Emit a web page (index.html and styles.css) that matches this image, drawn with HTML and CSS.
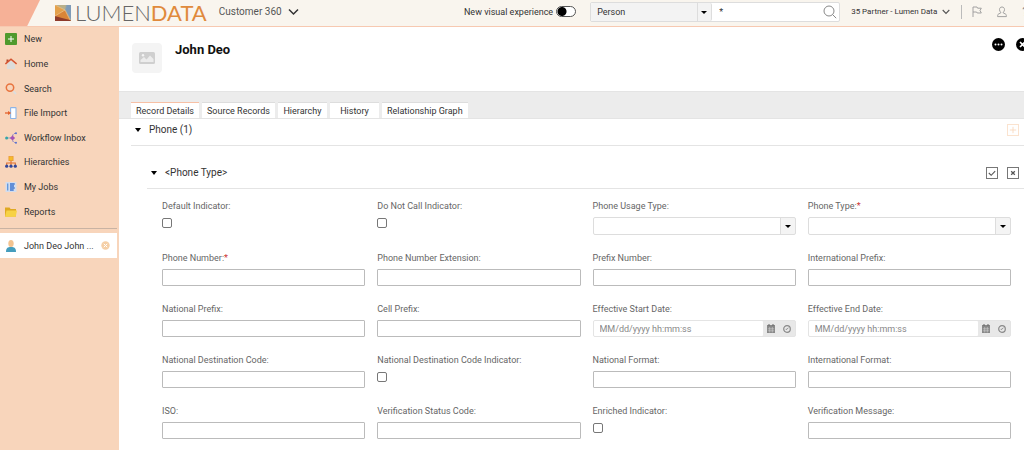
FILE: index.html
```
<!DOCTYPE html>
<html lang="en">
<head>
  <meta charset="UTF-8" />
  <meta name="viewport" content="width=device-width, initial-scale=1.0" />
  <title>Customer 360</title>
  <link rel="stylesheet" href="styles.css">
</head>
<body>
  <header class="top-bar">
    <div class="corner"></div>
    <div class="logo">
      <svg class="logo-mark" viewBox="0 0 16 16">
        <path d="M0 0H16V16H0Z" fill="#dd9440" />
        <path d="M2 0H16V16L10 5Z" fill="#8fa3ae" />
        <path d="M1 0H11L10 5Z" fill="#b9b08a" />
        <path d="M12 0H16V14L11 5Z" fill="#7f9bb8" />
        <path d="M0 0L10 5L0 11Z" fill="#e3a04a" />
        <path d="M0 11L12 12L16 16H0Z" fill="#8e3b2b" />
        <path d="M0 11L10 5L15 15L7 13Z" fill="#d98538" />
        <path d="M0 0L10 5L15 15M0 11L10 5" fill="none" stroke="#f3d9b0" stroke-width=".5" />
      </svg>
      <span class="logo-text">LUMEN<b>DATA</b></span>
    </div>
    <button class="app-switch">Customer 360
      <svg width="11" height="8" viewBox="0 0 11 8"><path d="M1 1.5L5.5 6L10 1.5" fill="none" stroke="#333" stroke-width="1.5" /></svg>
    </button>

    <div class="top-right">
      <label class="visual-toggle">New visual experience <input type="checkbox" class="switch" /></label>
      <div class="search-box">
        <div class="select-wrap search-type">
          <select aria-label="Search type"><option>Person</option></select>
        </div>
        <input type="text" class="search-input" aria-label="Search" value="*" />
        <button class="search-button" aria-label="Run search">
          <svg width="14" height="14" viewBox="0 0 14 14"><circle cx="6" cy="6" r="5" fill="none" stroke="#888" /><path d="M9.5 9.5L13.2 13.2" stroke="#888" /></svg>
        </button>
      </div>
      <button class="user-menu">35 Partner - Lumen Data
        <svg width="8" height="6" viewBox="0 0 8 6"><path d="M.7 1L4 4.5L7.3 1" fill="none" stroke="#555" stroke-width="1.1" /></svg>
      </button>
      <span class="divider"></span>
      <button class="icon-button flag" aria-label="Flags">
        <svg width="10" height="11" viewBox="0 0 10 11"><path d="M1 11V1H5L5.6 2.2H9.3L8 4.5L9.3 7H5.2L4.6 6H1" fill="none" stroke="#999" stroke-width=".9" /></svg>
      </button>
      <button class="icon-button profile" aria-label="Profile">
        <svg width="10" height="12" viewBox="0 0 10 12"><path d="M5 1C3.3 1 2.5 2.2 2.5 3.6C2.5 4.8 3 5.7 3.7 6.2V7L1.5 8C.8 8.4 .6 9 .6 10.6H9.4C9.4 9 9.2 8.4 8.5 8L6.3 7V6.2C7 5.7 7.5 4.8 7.5 3.6C7.5 2.2 6.7 1 5 1Z" fill="none" stroke="#999" stroke-width=".9" /></svg>
      </button>
      <button class="icon-button help" aria-label="Help">?</button>
    </div>
  </header>

  <div class="layout">
    <aside class="sidebar">
      <nav class="side-nav">
        <a href="#"><svg viewBox="0 0 12 12"><rect width="12" height="12" rx="1" fill="#4f9a2e" /><path d="M6 3V9M3 6H9" stroke="#fff" /></svg>New</a>
        <a href="#"><svg viewBox="0 0 12 12"><path d="M2 6L6 2.5L10 6V11H2Z" fill="#dcdcda" /><path d="M1.5 1.5H3.5V4H1.5Z" fill="#b54a2c" /><path d="M.4 6L6 1.2L11.6 6" fill="none" stroke="#d35432" stroke-width="1.5" /></svg>Home</a>
        <a href="#"><svg viewBox="0 0 12 12"><circle cx="5" cy="4.6" r="3.7" fill="none" stroke="#e8743f" stroke-width="1.5" /><path d="M8.4 8.4L11 11" stroke="#ddd" stroke-width="2" /></svg>Search</a>
        <a href="#"><svg viewBox="0 0 12 12"><rect x="5.6" y=".6" width="5.4" height="11" rx=".5" fill="#fff" stroke="#8db4e6" stroke-width="1.1" /><path d="M0 6H3.5" stroke="#e3622c" stroke-width="1.3" /><path d="M3 3.9L6.2 6L3 8.1Z" fill="#e3622c" /></svg>File Import</a>
        <a href="#"><svg viewBox="0 0 12 12"><path d="M2 6H8" stroke="#8aa3c4" /><path d="M11 1.3C7.5 1.3 7.6 3.5 7.6 6C7.6 8.5 7.5 10.7 11 10.7" fill="none" stroke="#7a79c8" stroke-dasharray="2 1" /><circle cx="1.6" cy="6" r="1.5" fill="#35a5a8" /><path d="M7.5 3.4L10.1 6L7.5 8.6L4.9 6Z" fill="#a552b5" /><circle cx="11" cy="1.3" r="1" fill="#5b72cf" /><circle cx="11" cy="10.7" r="1" fill="#5b72cf" /></svg>Workflow Inbox</a>
        <a href="#"><svg viewBox="0 0 12 12"><path d="M6 4V9M1.7 9V7H10.3V9" fill="none" stroke="#e0702e" stroke-width="1.1" /><rect x="3.9" y=".5" width="4.2" height="4.2" fill="#f5bb2b" stroke="#e58f29" stroke-width=".6" /><circle cx="1.7" cy="10.2" r="1.6" fill="#31479b" /><circle cx="6" cy="10.2" r="1.6" fill="#31479b" /><circle cx="10.3" cy="10.2" r="1.6" fill="#31479b" /></svg>Hierarchies</a>
        <a href="#"><svg viewBox="0 0 12 12"><rect x=".5" y="1" width="11" height="10" fill="#d3dded" /><path d="M2.7 2.5V9.5" stroke="#5f95dd" stroke-width="1.3" /><path d="M5 3H9.7M5 5H9M5 7H9.7M5 9H8.7" stroke="#3c74d0" stroke-width="1.3" /></svg>My Jobs</a>
        <a href="#"><svg viewBox="0 0 12 12"><path d="M0 1.5H4.5L5.7 3H11V10.5H0Z" fill="#dfa922" /><path d="M1.5 4.5H12L10.7 10.8H0Z" fill="#f7d244" /></svg>Reports</a>
      </nav>
      <div class="open-record">
        <svg viewBox="0 0 12 12"><path d="M1 12C1 8 2.5 7 6 7C9.5 7 11 8 11 12Z" fill="#459dbd" /><ellipse cx="6" cy="3.6" rx="2.7" ry="3.5" fill="#f3c390" /></svg>
        <a href="#">John Deo John ...</a>
        <button aria-label="Close record">
          <svg width="9" height="9" viewBox="0 0 9 9"><circle cx="4.5" cy="4.5" r="4.2" fill="#f5cfa6" /><path d="M2.8 2.8L6.2 6.2M6.2 2.8L2.8 6.2" stroke="#fff" /></svg>
        </button>
      </div>
    </aside>

    <main class="content">
      <section class="record-header">
        <div class="avatar">
          <svg width="16" height="12" viewBox="0 0 16 12"><rect width="16" height="12" rx="1.5" fill="#cfcfcf" /><path d="M1.5 10V8L5 5L7.5 7.5L11 3.5L14.5 7V10Z" fill="#f5f5f5" opacity=".75" /><circle cx="4" cy="3.2" r="1.2" fill="#f5f5f5" /></svg>
        </div>
        <h1>John Deo</h1>
        <div class="record-actions">
          <button aria-label="More actions">
            <svg width="13" height="13" viewBox="0 0 13 13"><circle cx="6.5" cy="6.5" r="6.5" /><g fill="#fff"><circle cx="3.5" cy="6.5" r="1" /><circle cx="6.5" cy="6.5" r="1" /><circle cx="9.5" cy="6.5" r="1" /></g></svg>
          </button>
          <button aria-label="Close">
            <svg width="13" height="13" viewBox="0 0 13 13"><circle cx="6.5" cy="6.5" r="6.5" /><path d="M4 4L9 9M9 4L4 9" stroke="#fff" stroke-width="1.6" /></svg>
          </button>
        </div>
      </section>

      <div class="tabs" role="tablist">
        <button role="tab" class="tab active" aria-selected="true">Record Details</button>
        <button role="tab" class="tab">Source Records</button>
        <button role="tab" class="tab">Hierarchy</button>
        <button role="tab" class="tab">History</button>
        <button role="tab" class="tab">Relationship Graph</button>
      </div>

      <div class="group-header">
        <button class="collapse"><span class="caret"></span>Phone (1)</button>
        <button class="box-button add" aria-label="Add phone">
          <svg viewBox="0 0 11 11"><path d="M5.5 2V9M2 5.5H9" stroke="currentColor" /></svg>
        </button>
      </div>

      <div class="group-header sub">
        <button class="collapse"><span class="caret"></span>&lt;Phone Type&gt;</button>
        <button class="box-button" aria-label="Apply">
          <svg viewBox="0 0 11 11"><path d="M2 5.5L4.6 8L9 3.500" fill="none" stroke="currentColor" stroke-width="1.2" /></svg>
        </button>
        <button class="box-button" aria-label="Cancel">
          <svg viewBox="0 0 11 11"><path d="M3.5 3.5L7.5 7.5M7.5 3.5L3.5 7.5" stroke="currentColor" stroke-width="1.4" /></svg>
        </button>
      </div>

      <form class="fields">
        <div class="field"><label for="default-indicator">Default Indicator:</label><input type="checkbox" id="default-indicator" /></div>
        <div class="field"><label for="do-not-call">Do Not Call Indicator:</label><input type="checkbox" id="do-not-call" /></div>
        <div class="field"><label for="usage-type">Phone Usage Type:</label><div class="select-wrap"><select id="usage-type"><option></option></select></div></div>
        <div class="field"><label for="phone-type">Phone Type:<em>*</em></label><div class="select-wrap"><select id="phone-type"><option></option></select></div></div>

        <div class="field"><label for="phone-number">Phone Number:<em>*</em></label><input type="text" id="phone-number" /></div>
        <div class="field"><label for="extension">Phone Number Extension:</label><input type="text" id="extension" /></div>
        <div class="field"><label for="prefix-number">Prefix Number:</label><input type="text" id="prefix-number" /></div>
        <div class="field"><label for="int-prefix">International Prefix:</label><input type="text" id="int-prefix" /></div>

        <div class="field"><label for="nat-prefix">National Prefix:</label><input type="text" id="nat-prefix" /></div>
        <div class="field"><label for="cell-prefix">Cell Prefix:</label><input type="text" id="cell-prefix" /></div>
        <div class="field">
          <label for="start-date">Effective Start Date:</label>
          <div class="date-box">
            <input type="text" id="start-date" placeholder="MM/dd/yyyy hh:mm:ss" />
            <button type="button" aria-label="Pick start date"><svg width="8" height="9" viewBox="0 0 8 9"><path d="M0 1H8V9H0Z" fill="#888" /><path d="M.8 4.8H7.2M.8 6.8H7.2M2.7 3V8.5M5.3 3V8.5" stroke="#ddd" stroke-width=".5" /><path d="M2 0V2M6 0V2" stroke="#666" /></svg></button>
            <button type="button" aria-label="Pick start time"><svg width="8" height="8" viewBox="0 0 8 8"><circle cx="4" cy="4" r="3.3" fill="none" stroke="#888" stroke-width="1.2" /><path d="M5.3 2.7L4 4.3H2.7" fill="none" stroke="#888" stroke-width=".9" /></svg></button>
          </div>
        </div>
        <div class="field">
          <label for="end-date">Effective End Date:</label>
          <div class="date-box">
            <input type="text" id="end-date" placeholder="MM/dd/yyyy hh:mm:ss" />
            <button type="button" aria-label="Pick end date"><svg width="8" height="9" viewBox="0 0 8 9"><path d="M0 1H8V9H0Z" fill="#888" /><path d="M.8 4.8H7.2M.8 6.8H7.2M2.7 3V8.5M5.3 3V8.5" stroke="#ddd" stroke-width=".5" /><path d="M2 0V2M6 0V2" stroke="#666" /></svg></button>
            <button type="button" aria-label="Pick end time"><svg width="8" height="8" viewBox="0 0 8 8"><circle cx="4" cy="4" r="3.3" fill="none" stroke="#888" stroke-width="1.2" /><path d="M5.3 2.7L4 4.3H2.7" fill="none" stroke="#888" stroke-width=".9" /></svg></button>
          </div>
        </div>

        <div class="field"><label for="nat-code">National Destination Code:</label><input type="text" id="nat-code" /></div>
        <div class="field"><label for="nat-code-indicator">National Destination Code Indicator:</label><input type="checkbox" id="nat-code-indicator" /></div>
        <div class="field"><label for="nat-format">National Format:</label><input type="text" id="nat-format" /></div>
        <div class="field"><label for="int-format">International Format:</label><input type="text" id="int-format" /></div>

        <div class="field"><label for="iso">ISO:</label><input type="text" id="iso" /></div>
        <div class="field"><label for="status-code">Verification Status Code:</label><input type="text" id="status-code" /></div>
        <div class="field"><label for="enriched">Enriched Indicator:</label><input type="checkbox" id="enriched" /></div>
        <div class="field"><label for="message">Verification Message:</label><input type="text" id="message" /></div>
      </form>
    </main>
  </div>
</body>
</html>
```
FILE: styles.css
```
* {
  box-sizing: border-box;
}

body {
  margin: 0;
  min-height: 100vh;
  display: flex;
  flex-direction: column;
  font-family: Roboto, "Liberation Sans", sans-serif;
  font-size: 9px;
  line-height: 12px;
  color: #333;
  background: #fff;
  overflow: hidden;
}

button,
input,
select {
  font: inherit;
  color: inherit;
  margin: 0;
  padding: 0;
  border: 0;
  border-radius: 0;
  background: none;
}

button {
  cursor: pointer;
}

a {
  color: inherit;
  text-decoration: none;
}

svg {
  display: block;
  flex: none;
}

/* Top bar */
.top-bar {
  display: flex;
  align-items: center;
  height: 27px;
  padding-bottom: 3px;
  background: #f9f5ee;
  border-bottom: 1px solid #f7c9b1;
  white-space: nowrap;
}

.corner {
  width: 40px;
  height: 26px;
  margin-bottom: -3px;
  background: #f6b197;
  clip-path: polygon(0 0, 100% 0, 68% 100%, 0 100%);
}

.logo {
  display: flex;
  align-items: center;
  gap: 4px;
  margin-left: 15px;
  padding-top: 2px;
}

.logo-mark {
  width: 16px;
  height: 16px;
}

.logo-text {
  font-family: Lato, sans-serif;
  font-size: 22px;
  font-weight: 300;
  line-height: 22px;
  color: #666;
}

.logo-text b {
  font-weight: 400;
  color: #e08a3c;
}

.app-switch {
  display: flex;
  align-items: center;
  gap: 6px;
  margin-left: 12px;
  font-size: 10px;
  color: #555;
}

.top-right {
  display: flex;
  align-items: center;
  margin-left: auto;
  margin-right: -4px;
}

.visual-toggle {
  display: flex;
  align-items: center;
  gap: 3px;
}

.switch {
  appearance: none;
  width: 20px;
  height: 11px;
  border: 1px solid #555;
  border-radius: 6px;
  background: radial-gradient(circle at 5px 50%, #000 4px, #fff 5px);
}

.search-box {
  display: flex;
  width: 250px;
  height: 20px;
  margin-left: 14px;
  border: 1px solid #ddd;
  border-radius: 2px;
  background: #fff;
}

.search-type {
  width: 121px;
}

.search-input {
  flex: 1;
  min-width: 0;
  padding-left: 7px;
}

.search-button {
  padding: 0 2px;
}

.user-menu {
  display: flex;
  align-items: center;
  gap: 5px;
  margin-left: 11px;
  font-size: 8px;
}

.divider {
  width: 1px;
  height: 14px;
  margin-left: 11px;
  background: #bbb;
}

.icon-button {
  margin-left: 15px;
  color: #888;
}

.flag {
  margin-left: 10px;
}

.help {
  font-size: 12px;
}

/* Select with its own arrow */
.select-wrap {
  position: relative;
  display: flex;
}

.select-wrap select {
  appearance: none;
  flex: 1;
  min-width: 0;
  height: 18px;
  padding: 0 20px 0 6px;
  border: 1px solid #ddd;
  border-radius: 2px;
  background: linear-gradient(to left, #f4f4f4 14px, #ddd 14px, #ddd 15px, #fff 15px);
}

.search-type select {
  border: 0;
  border-right: 1px solid #ddd;
  background: linear-gradient(to left, #f3f3f3 13px, #ddd 13px, #ddd 14px, #f3f3f3 14px);
}

.select-wrap::after {
  content: "";
  position: absolute;
  top: 8px;
  right: 5px;
  border: 3px solid transparent;
  border-top-color: #000;
  border-bottom: 0;
  pointer-events: none;
}

/* Sidebar */
.layout {
  display: flex;
  flex: 1;
}

.sidebar {
  width: 119px;
  flex: none;
  background: #f8d5bb;
}

.side-nav {
  display: grid;
  grid-auto-rows: 1fr;
  height: 197px;
}

.side-nav a {
  display: flex;
  align-items: center;
  gap: 7px;
  padding-left: 5px;
}

.side-nav svg,
.open-record > svg {
  width: 12px;
  height: 12px;
}

.open-record {
  display: flex;
  align-items: center;
  gap: 7px;
  height: 25px;
  margin: 9px 2px 0 0;
  padding-left: 5px;
  background: #fff;
  box-shadow: 0 -4px #f8d5bb, 0 -5px #c9b3a3;
}

/* Record header */
.content {
  flex: 1;
  min-width: 0;
}

.record-header {
  display: flex;
  align-items: flex-start;
  height: 64px;
  padding: 16px 0 0 13px;
}

.avatar {
  display: flex;
  align-items: center;
  justify-content: center;
  width: 30px;
  height: 30px;
  border-radius: 4px;
  background: #f4f4f4;
}

h1 {
  flex: 1;
  margin: 0 0 0 13px;
  font-size: 13px;
  line-height: 13px;
  font-weight: 700;
  color: #111;
}

.record-actions {
  display: flex;
  gap: 11px;
  margin: -5px -5px 0 0;
}

/* Tabs */
.tabs {
  display: flex;
  align-items: flex-end;
  gap: 3px;
  height: 28px;
  padding-left: 12px;
  background: #ececec;
  border-top: 1px solid #e4e4e4;
  border-bottom: 1px solid #e4e4e4;
}

.tab {
  min-width: 49px;
  height: 16px;
  padding: 0 5px;
  background: #fff;
  border-top: 1px solid #ddd;
}

.tab.active {
  border-top-color: #f7c0a5;
}

/* Group headers */
.group-header {
  display: flex;
  align-items: center;
  gap: 9px;
  height: 27px;
  margin-left: 12px;
  padding: 0 5px 4px 4px;
  border-bottom: 1px solid #e4e4e4;
  font-size: 10px;
}

.group-header.sub {
  height: 43px;
  margin-left: 28px;
  padding-top: 14px;
  padding-bottom: 2px;
}

.collapse {
  display: flex;
  align-items: center;
  gap: 8px;
  margin-right: auto;
}

.caret {
  border: 3px solid transparent;
  border-top: 4px solid #000;
  border-bottom: 0;
}

.box-button {
  width: 12px;
  height: 12px;
  border: 1px solid #777;
  color: #555;
}

.box-button.add {
  border-color: #fbe3cf;
  color: #f9d9bf;
}

/* Form fields */
.fields {
  display: grid;
  grid-template-columns: repeat(4, 1fr);
  gap: 17px 12px;
  padding: 11px 13px 11px 43px;
}

.field {
  display: flex;
  flex-direction: column;
  gap: 5px;
  min-width: 0;
}

.field label {
  color: #666;
}

.field em {
  font-style: normal;
  color: #c33;
}

.field input[type="text"] {
  width: 100%;
  height: 17px;
  padding: 0 6px;
  border: 1px solid #bbb;
  border-radius: 1px;
}

.field input[type="checkbox"] {
  appearance: none;
  width: 10px;
  height: 10px;
  margin-top: 1px;
  border: 1px solid #777;
  border-radius: 2px;
}

.date-box {
  display: flex;
  height: 17px;
  border: 1px solid #e4e4e4;
  border-radius: 2px;
  background: #e8e8e8;
}

.field .date-box input {
  flex: 1;
  min-width: 0;
  height: 15px;
  border: 0;
  background: #fff;
}

.date-box input::placeholder {
  color: #888;
}

.date-box button {
  padding: 0 4px;
}
```
